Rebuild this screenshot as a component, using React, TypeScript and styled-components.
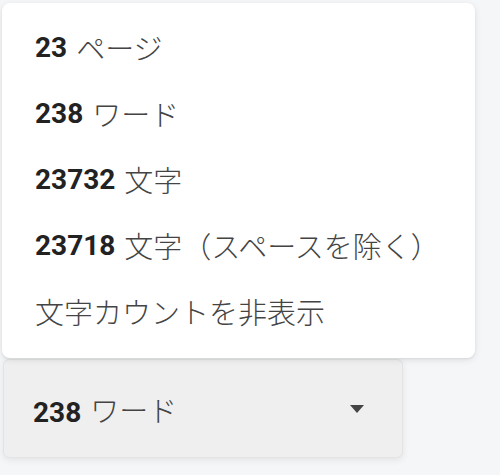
import React from 'react'
import styled, { createGlobalStyle } from 'styled-components'

const GlobalStyle = createGlobalStyle`
  html, body {
    margin: 0;
    padding: 0;
    background: #f5f6f8;
    font-family: Roboto, "Noto Sans CJK JP", sans-serif;
  }
`

const StyledPage = styled.div`
  width: 500px;
  height: 475px;
  padding: 3px 0 0 2px;
  box-sizing: border-box;
  overflow: hidden;
`

const StyledMenu = styled.div`
  width: 473px;
  height: 355px;
  box-sizing: border-box;
  padding: 11px 0 14px 0;
  background: #ffffff;
  border-radius: 8px;
  box-shadow: 0 2px 6px rgba(60, 64, 67, 0.12), 0 1px 2px rgba(60, 64, 67, 0.08);
  position: relative;
  z-index: 2;
`

const StyledItem = styled.div`
  height: 66px;
  display: flex;
  align-items: center;
  padding-left: 33px;
  font-size: 29px;
  font-weight: 300;
  color: #444444;
  white-space: nowrap;
`

const StyledCount = styled.b`
  font-size: 28px;
  font-weight: 700;
  color: #222222;
  margin-right: 9px;
`

const StyledButton = styled.div`
  width: 400px;
  height: 99px;
  margin: 1px 0 0 1px;
  box-sizing: border-box;
  padding: 0 38px 0 29px;
  display: flex;
  align-items: center;
  justify-content: space-between;
  background: #efefef;
  border: 1px solid #e4e4e4;
  border-radius: 6px;
  box-shadow: 0 2px 6px rgba(60, 64, 67, 0.1);
  font-size: 29px;
  font-weight: 300;
  color: #444444;
`

const StyledArrow = styled.span`
  width: 0;
  height: 0;
  border-left: 7px solid transparent;
  border-right: 7px solid transparent;
  border-top: 8px solid #444444;
`

const items = [
  { count: '23', label: 'ページ' },
  { count: '238', label: 'ワード' },
  { count: '23732', label: '文字' },
  { count: '23718', label: '文字（スペースを除く）' },
  { count: '', label: '文字カウントを非表示' },
]

const App: React.FC = () => {
  return (
    <>
      <GlobalStyle />
      <StyledPage>
        <StyledMenu>
          {items.map((item) => (
            <StyledItem key={item.label + item.count}>
              {item.count && <StyledCount>{item.count}</StyledCount>}
              {item.label}
            </StyledItem>
          ))}
        </StyledMenu>
        <StyledButton>
          <span>
            <StyledCount>238</StyledCount>ワード
          </span>
          <StyledArrow />
        </StyledButton>
      </StyledPage>
    </>
  )
}

export default App
